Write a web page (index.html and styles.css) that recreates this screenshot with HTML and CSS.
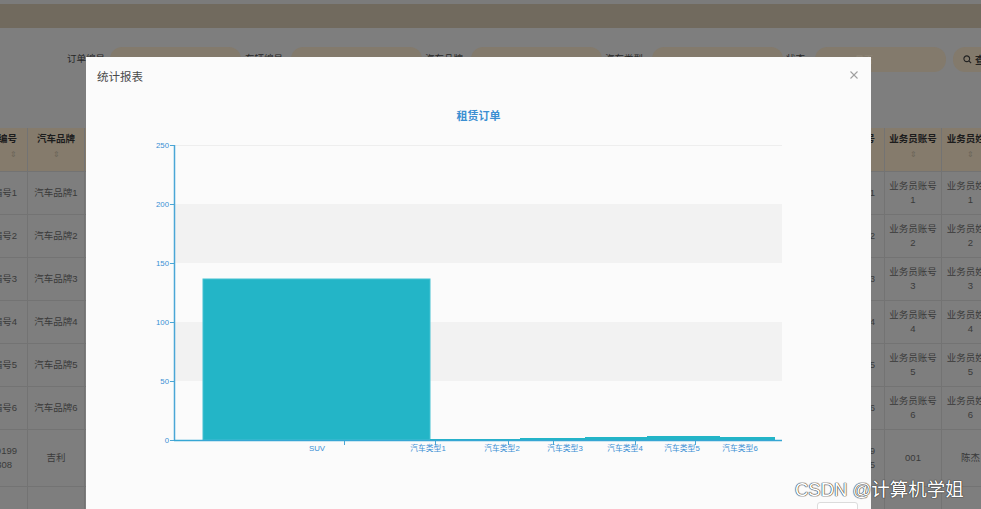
FILE: index.html
```html
<!DOCTYPE html>
<html lang="zh">
<head>
<meta charset="utf-8">
<title>统计报表</title>
<link rel="stylesheet" href="styles.css">
</head>
<body>
<div class="page">
  <div class="topstrip"></div>
  <div class="nav"></div>
  <div class="search">
    <label class="lbl">订单编号</label><div class="pill"></div>
    <label class="lbl">车辆编号</label><div class="pill"></div>
    <label class="lbl">汽车品牌</label><div class="pill"></div>
    <label class="lbl">汽车类型</label><div class="pill"></div>
    <label class="lbl">状态</label><div class="pill"><span class="ph">是否</span></div>
    <div class="gap"></div>
    <div class="sbtn"><svg width="9" height="9" viewBox="0 0 10 10"><circle cx="4.2" cy="4.2" r="3.2" fill="none" stroke="#222" stroke-width="1.2"/><line x1="6.6" y1="6.6" x2="9" y2="9" stroke="#222" stroke-width="1.2"/></svg><span>查询</span></div>
  </div>

  <div class="table">
    <div class="row head">
      <div class="cell c1"><b>车辆编号</b><i>⇕</i></div>
      <div class="cell"><b>汽车品牌</b><i>⇕</i></div>
      <div class="cell"></div>
      <div class="cell right"><b>业务员编号</b></div>
      <div class="cell"><b>业务员账号</b><i>⇕</i></div>
      <div class="cell"><b>业务员姓名</b><i>⇕</i></div>
    </div>
    <div class="row"><div class="cell c1">车辆编号1</div><div class="cell">汽车品牌1</div><div class="cell"></div><div class="cell right">类型1</div><div class="cell">业务员账号<br>1</div><div class="cell">业务员姓名<br>1</div></div>
    <div class="row"><div class="cell c1">车辆编号2</div><div class="cell">汽车品牌2</div><div class="cell"></div><div class="cell right">类型2</div><div class="cell">业务员账号<br>2</div><div class="cell">业务员姓名<br>2</div></div>
    <div class="row"><div class="cell c1">车辆编号3</div><div class="cell">汽车品牌3</div><div class="cell"></div><div class="cell right">类型3</div><div class="cell">业务员账号<br>3</div><div class="cell">业务员姓名<br>3</div></div>
    <div class="row"><div class="cell c1">车辆编号4</div><div class="cell">汽车品牌4</div><div class="cell"></div><div class="cell right">类型4</div><div class="cell">业务员账号<br>4</div><div class="cell">业务员姓名<br>4</div></div>
    <div class="row"><div class="cell c1">车辆编号5</div><div class="cell">汽车品牌5</div><div class="cell"></div><div class="cell right">类型5</div><div class="cell">业务员账号<br>5</div><div class="cell">业务员姓名<br>5</div></div>
    <div class="row"><div class="cell c1">车辆编号6</div><div class="cell">汽车品牌6</div><div class="cell"></div><div class="cell right">类型6</div><div class="cell">业务员账号<br>6</div><div class="cell">业务员姓名<br>6</div></div>
    <div class="row tall"><div class="cell c1">16819199<br><span class="sub">308</span></div><div class="cell">吉利</div><div class="cell"></div><div class="cell right">2023109<br>5</div><div class="cell">001</div><div class="cell">陈杰</div></div>
    <div class="row"><div class="cell c1"></div><div class="cell"></div><div class="cell"></div><div class="cell"></div><div class="cell"></div><div class="cell"></div></div>
  </div>
</div>

<div class="modal">
  <div class="modal-head">
    <span class="modal-title">统计报表</span>
    <svg class="close" width="8" height="8" viewBox="0 0 8 8"><line x1="0.5" y1="0.5" x2="7.5" y2="7.5" stroke="#a0a0a0" stroke-width="1.1"/><line x1="7.5" y1="0.5" x2="0.5" y2="7.5" stroke="#a0a0a0" stroke-width="1.1"/></svg>
  </div>
  <svg class="chart" width="785" height="402" viewBox="0 0 785 402">
    <text x="392.5" y="20" text-anchor="middle" class="ctitle">租赁订单</text>
    <rect x="88" y="104" width="608" height="59" fill="#f2f2f2"/>
    <rect x="88" y="222" width="608" height="59" fill="#f2f2f2"/>
    <line x1="88" y1="45.5" x2="696" y2="45.5" stroke="#eeeeee"/>
    <rect x="117" y="179" width="227" height="161" fill="#23b5c7" stroke="#45c2d2" stroke-width="1"/>
    <rect x="344" y="339" width="90" height="1" fill="#23b5c7"/>
    <rect x="434" y="338" width="65" height="2" fill="#23b5c7"/>
    <rect x="499" y="337" width="62" height="3" fill="#23b5c7"/>
    <rect x="561" y="336" width="73" height="4" fill="#23b5c7"/>
    <rect x="634" y="337" width="55" height="3" fill="#23b5c7"/>
    <g stroke="#4aa6d6" stroke-width="1">
      <line x1="88.5" y1="45" x2="88.5" y2="341" stroke-width="1.5"/>
      <line x1="84" y1="45.5" x2="88" y2="45.5"/>
      <line x1="84" y1="104.5" x2="88" y2="104.5"/>
      <line x1="84" y1="163.5" x2="88" y2="163.5"/>
      <line x1="84" y1="222.5" x2="88" y2="222.5"/>
      <line x1="84" y1="281.5" x2="88" y2="281.5"/>
      <line x1="84" y1="340.5" x2="88" y2="340.5"/>
      <line x1="88" y1="340.5" x2="696" y2="340.5" stroke="#36a6d4" stroke-width="1.5"/>
      <line x1="258.5" y1="341" x2="258.5" y2="345"/>
      <line x1="349.5" y1="341" x2="349.5" y2="345"/>
      <line x1="422.5" y1="341" x2="422.5" y2="345"/>
      <line x1="467.5" y1="341" x2="467.5" y2="345"/>
      <line x1="549.5" y1="341" x2="549.5" y2="345"/>
      <line x1="609.5" y1="341" x2="609.5" y2="345"/>
    </g>
    <g class="axl" text-anchor="end">
      <text x="83" y="48">250</text>
      <text x="83" y="107">200</text>
      <text x="83" y="166">150</text>
      <text x="83" y="225">100</text>
      <text x="83" y="284">50</text>
      <text x="83" y="343">0</text>
    </g>
    <g class="axl" text-anchor="middle">
      <text x="231" y="351">SUV</text>
      <text x="342" y="351">汽车类型1</text>
      <text x="416" y="351">汽车类型2</text>
      <text x="479" y="351">汽车类型3</text>
      <text x="539" y="351">汽车类型4</text>
      <text x="596" y="351">汽车类型5</text>
      <text x="654" y="351">汽车类型6</text>
    </g>
  </svg>
  <div class="modal-foot">
    <button class="fbtn">取消</button>
  </div>
</div>

<div class="watermark">CSDN @计算机学姐</div>
</body>
</html>
```

FILE: styles.css
```css
html, body {
  margin: 0;
  padding: 0;
}
body {
  width: 981px;
  height: 509px;
  overflow: hidden;
  position: relative;
  background: #7e7e7e;
  font-family: "Liberation Sans", "Noto Sans CJK SC", sans-serif;
}
.page {
  width: 981px;
  height: 509px;
  overflow: hidden;
  background: #7e7e7e;
}
.topstrip {
  height: 4px;
  background: #7b7b7b;
}
.nav {
  height: 24px;
  background: #716a5e;
}
.search {
  margin-top: 19px;
  height: 25px;
  padding-left: 67px;
  display: grid;
  grid-template-columns: 43px 131px 50px 131px 49px 131px 50px 131px 32px 131px 7px 60px;
  align-items: center;
}
.lbl {
  font-size: 9.5px;
  color: #262626;
  text-align: right;
  padding-right: 6px;
  white-space: nowrap;
  align-self: start;
  padding-top: 4px;
}
.lbl:nth-of-type(2), .lbl:nth-of-type(3) { padding-right: 8px; }
.lbl:nth-of-type(4) { padding-right: 9px; }
.lbl:nth-of-type(5) { padding-right: 10px; }
.pill {
  height: 25px;
  border-radius: 12px;
  background: #837a6c;
  display: flex;
  align-items: center;
}
.ph {
  font-size: 9px;
  color: #918879;
  padding-left: 40px;
}
.sbtn {
  height: 25px;
  border-radius: 12px 0 0 12px;
  background: #837a6c;
  display: flex;
  align-items: center;
  gap: 3px;
  padding-left: 10px;
  font-size: 10px;
  font-weight: bold;
  color: #222;
  white-space: nowrap;
}
.table {
  margin-top: 56px;
  width: 1000px;
}
.row {
  display: grid;
  grid-template-columns: 28px 57px 700px 100px 57px 58px;
  height: 43px;
}
.row.head {
  height: 44px;
  background: #857b6c;
}
.row.tall {
  height: 57px;
}
.cell {
  border-right: 1px solid #737373;
  border-bottom: 1px solid #737373;
  font-size: 9.5px;
  line-height: 14px;
  color: #3a3a3a;
  display: flex;
  flex-direction: column;
  align-items: center;
  justify-content: center;
  text-align: center;
  white-space: nowrap;
  overflow: hidden;
}
.head .cell {
  justify-content: flex-start;
  padding-top: 4px;
  box-sizing: border-box;
  color: #1c1c1c;
}
.head .cell b {
  font-size: 9.5px;
}
.head .cell i {
  font-style: normal;
  font-size: 8px;
  color: #6a6458;
  margin-top: 2px;
}
.cell.c1 {
  align-items: flex-end;
  text-align: right;
  padding-right: 10px;
}
.cell.c1 .sub {
  padding-right: 5px;
}
.cell.right {
  align-items: flex-end;
  text-align: right;
  padding-right: 9px;
}
.modal {
  position: absolute;
  left: 86px;
  top: 57px;
  width: 785px;
  height: 470px;
  background: #fbfbfb;
  display: flex;
  flex-direction: column;
}
.modal-head {
  height: 43px;
  flex: none;
  box-sizing: border-box;
  padding: 13px 13px 0 11px;
  display: flex;
  justify-content: space-between;
  align-items: flex-start;
}
.modal-title {
  font-size: 11.5px;
  color: #4a4a4a;
  line-height: 14px;
}
.close {
  margin-top: 1px;
}
.chart {
  display: block;
  flex: none;
}
.ctitle {
  font-size: 11px;
  font-weight: bold;
  fill: #3b8fd2;
}
.axl text {
  font-size: 7.8px;
  fill: #3a8fd4;
}
.modal-foot {
  display: flex;
  justify-content: flex-end;
  padding-right: 13px;
}
.fbtn {
  width: 41px;
  height: 24px;
  border: 1px solid #dcdcdc;
  border-radius: 3px;
  background: #fff;
  font-family: "Liberation Sans", "Noto Sans CJK SC", sans-serif;
  font-size: 10px;
  color: #555;
  padding: 0;
}
.watermark {
  position: absolute;
  left: 795px;
  top: 478px;
  font-size: 18.5px;
  line-height: 24px;
  color: #ffffff;
  white-space: nowrap;
  text-shadow: 0 0 1px #333, 0 0 1px #333, 0 0 1px #444;
}
```
